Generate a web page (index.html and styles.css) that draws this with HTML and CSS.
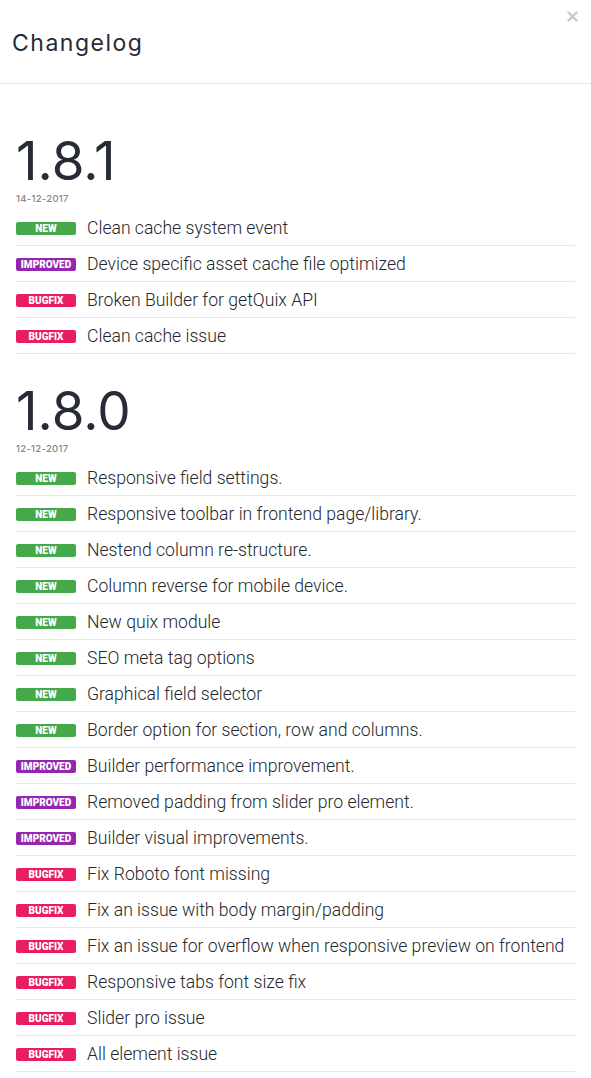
FILE: index.html
```html
<!DOCTYPE html>
<html>
<head>
<meta charset="utf-8">
<link rel="stylesheet" href="styles.css">
</head>
<body>
<div class="modal">
  <header class="modal-header">
    <h1 class="title">Changelog</h1>
    <svg class="close" width="11" height="11" viewBox="0 0 11 11" aria-label="Close"><path d="M1.5 1.5 L9.5 9.5 M9.5 1.5 L1.5 9.5" stroke="#c9c9c9" stroke-width="2.4" stroke-linecap="round"/></svg>
  </header>
  <div class="modal-body">
    <section class="release">
      <h2 class="version">1.8.1</h2>
      <div class="date">14-12-2017</div>
      <ul class="items">
        <li class="item"><span class="badge new">NEW</span><span class="text">Clean cache system event</span></li>
        <li class="item"><span class="badge improved">IMPROVED</span><span class="text">Device specific asset cache file optimized</span></li>
        <li class="item"><span class="badge bugfix">BUGFIX</span><span class="text">Broken Builder for getQuix API</span></li>
        <li class="item"><span class="badge bugfix">BUGFIX</span><span class="text">Clean cache issue</span></li>
      </ul>
    </section>
    <section class="release">
      <h2 class="version">1.8.0</h2>
      <div class="date">12-12-2017</div>
      <ul class="items">
        <li class="item"><span class="badge new">NEW</span><span class="text">Responsive field settings.</span></li>
        <li class="item"><span class="badge new">NEW</span><span class="text">Responsive toolbar in frontend page/library.</span></li>
        <li class="item"><span class="badge new">NEW</span><span class="text">Nestend column re-structure.</span></li>
        <li class="item"><span class="badge new">NEW</span><span class="text">Column reverse for mobile device.</span></li>
        <li class="item"><span class="badge new">NEW</span><span class="text">New quix module</span></li>
        <li class="item"><span class="badge new">NEW</span><span class="text">SEO meta tag options</span></li>
        <li class="item"><span class="badge new">NEW</span><span class="text">Graphical field selector</span></li>
        <li class="item"><span class="badge new">NEW</span><span class="text">Border option for section, row and columns.</span></li>
        <li class="item"><span class="badge improved">IMPROVED</span><span class="text">Builder performance improvement.</span></li>
        <li class="item"><span class="badge improved">IMPROVED</span><span class="text">Removed padding from slider pro element.</span></li>
        <li class="item"><span class="badge improved">IMPROVED</span><span class="text">Builder visual improvements.</span></li>
        <li class="item"><span class="badge bugfix">BUGFIX</span><span class="text">Fix Roboto font missing</span></li>
        <li class="item"><span class="badge bugfix">BUGFIX</span><span class="text">Fix an issue with body margin/padding</span></li>
        <li class="item"><span class="badge bugfix">BUGFIX</span><span class="text">Fix an issue for overflow when responsive preview on frontend</span></li>
        <li class="item"><span class="badge bugfix">BUGFIX</span><span class="text">Responsive tabs font size fix</span></li>
        <li class="item"><span class="badge bugfix">BUGFIX</span><span class="text">Slider pro issue</span></li>
        <li class="item"><span class="badge bugfix">BUGFIX</span><span class="text">All element issue</span></li>
      </ul>
    </section>
  </div>
</div>
</body>
</html>
```
FILE: styles.css
```css
html, body {
  margin: 0;
  padding: 0;
  background: #fff;
}
body {
  font-family: Roboto, "Liberation Sans", sans-serif;
  color: #2b2f38;
  overflow: hidden;
}
.modal {
  width: 591px;
}
.modal-header {
  position: relative;
  height: 84px;
  border-bottom: 1px solid #e3e3e3;
  display: flex;
  align-items: center;
  padding: 0 12px;
  box-sizing: border-box;
}
.title {
  margin: 0;
  font-family: Inter, "Noto Sans", sans-serif;
  font-weight: 400;
  font-size: 23px;
  color: #262b33;
  letter-spacing: 1.5px;
  position: relative;
  top: 1px;
}
.close {
  position: absolute;
  top: 11px;
  right: 13px;
}
.modal-body {
  padding: 49px 16px 0;
}
.release + .release {
  margin-top: 29px;
}
.version {
  margin: 0;
  font-family: Inter, "Noto Sans", sans-serif;
  font-weight: 400;
  font-size: 53px;
  line-height: 56px;
  letter-spacing: 0;
  color: #262b35;
}
.date {
  font-family: Inter, "Noto Sans", sans-serif;
  font-size: 9.5px;
  line-height: 12px;
  color: #8a8680;
  font-weight: 500;
  margin-top: 4px;
  margin-bottom: 5px;
  letter-spacing: 0.3px;
}
.items {
  list-style: none;
  margin: 0;
  padding: 0;
  width: 559px;
}
.item {
  display: flex;
  align-items: center;
  height: 35px;
  border-bottom: 1px solid #e8e8e8;
}
.badge {
  flex: none;
  width: 60px;
  height: 13px;
  border-radius: 2px;
  color: #fff;
  font-family: Roboto, "Liberation Sans", sans-serif;
  font-weight: 900;
  font-size: 10px;
  line-height: 13px;
  text-align: center;
  margin-right: 11px;
  margin-top: 2px;
}
.badge.new { background: #45a84a; }
.badge.improved { background: #9427b0; }
.badge.bugfix { background: #e91e5f; }
.text {
  font-size: 17.6px;
  font-weight: 300;
  color: #24272d;
}
```
